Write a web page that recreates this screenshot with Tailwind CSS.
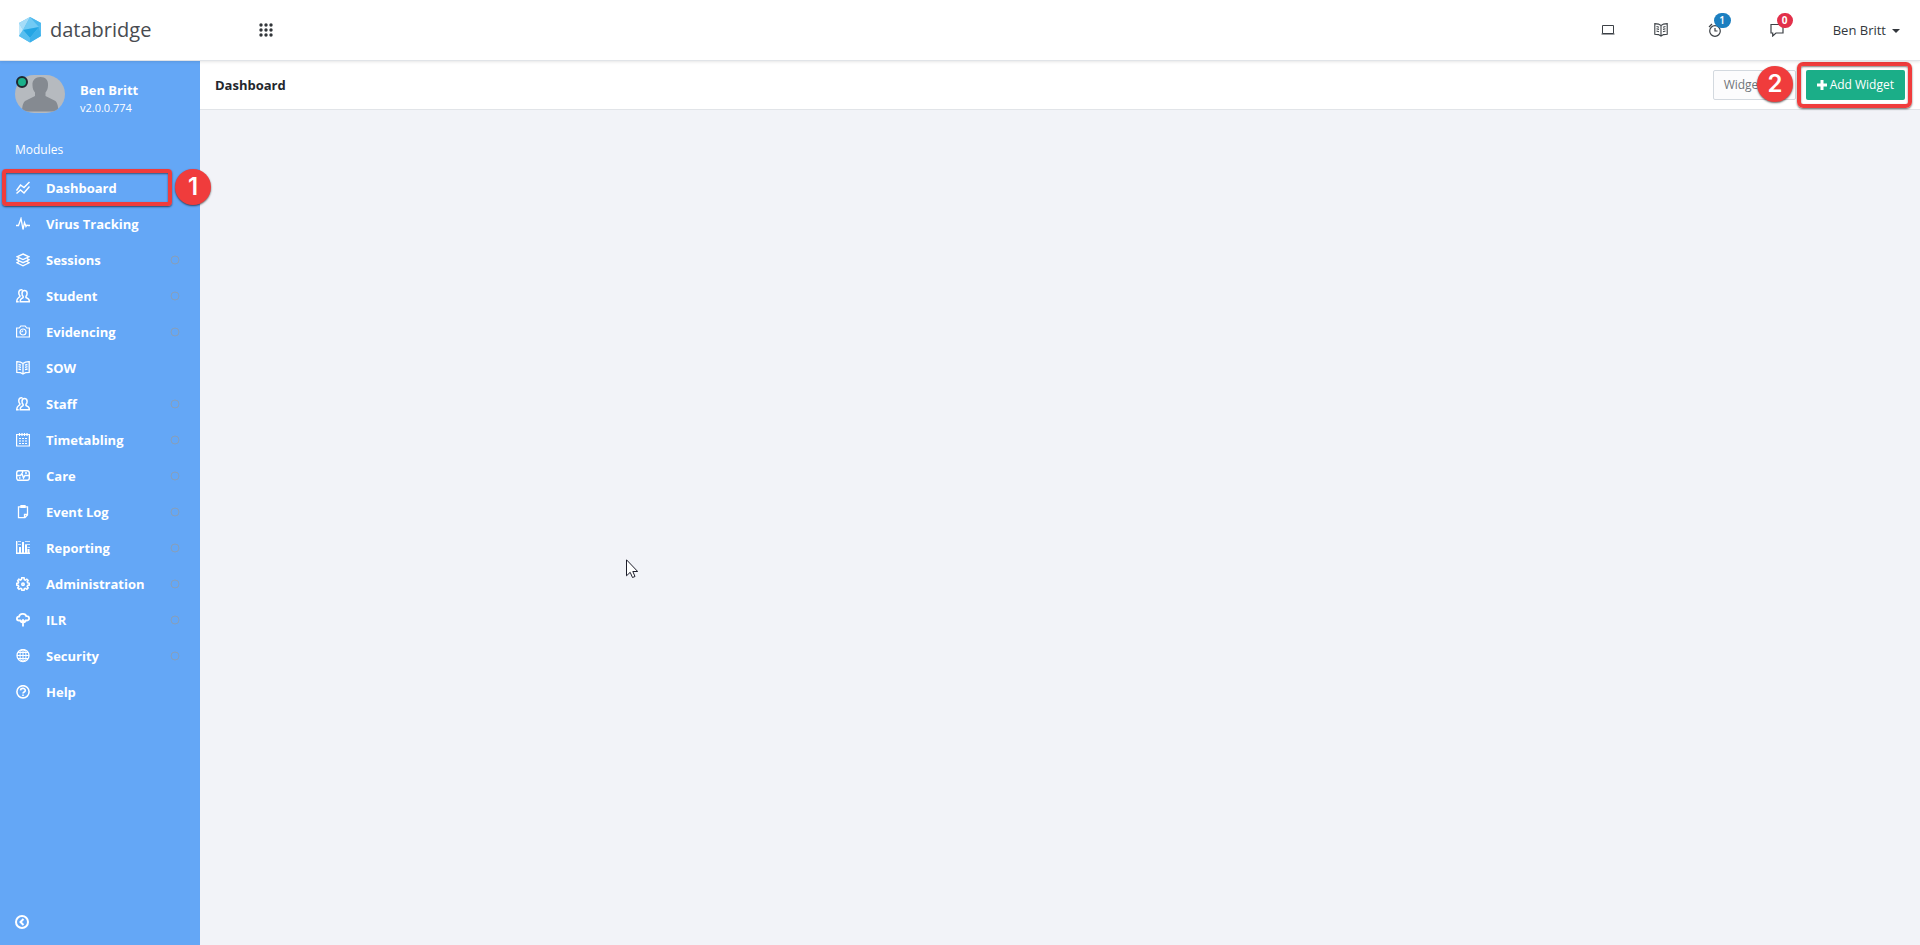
<!DOCTYPE html>
<html lang="en">
<head>
<meta charset="utf-8">
<title>databridge</title>
<script src="https://cdn.jsdelivr.net/npm/@tailwindcss/browser@4"></script>
</head>
<body class="relative flex min-h-screen flex-col overflow-x-hidden bg-[#f2f3f8] font-['Open_Sans',sans-serif] text-[13px] text-[#32373c]">

<svg class="hidden" aria-hidden="true">
  <defs>
    <symbol id="book" viewBox="0 0 14 14"><path d="M7 2.500 4.500 1.100.8.600v10.700l3.700.3L7 13l2.500-1.400 3.700-.3V.6l-3.700.5L7 2.500v10M2.500 3.500l2.500.7M2.500 5.700l2.500.7M2.500 8l2.500.7M11.500 3.500 9 4.200M11.500 5.700 9 6.400M11.500 8 9 8.700"/></symbol>
    <symbol id="people" viewBox="0 0 14 14"><path d="M8.500 1.500c1.700 0 2.600 1.100 2.600 2.900 0 1.300-.4 2.200-1.100 2.900v1.200l2.300 1.300c.7.500 1 1.500 1 3H4.200c0-1.500.3-2.500 1-3l1.900-1.300V7.300C6.300 6.600 6 5.700 6 4.400c0-1.800.9-2.900 2.500-2.900ZM6.500.9C3.900.300 2.700 1.700 2.800 3.900c0 1.300.4 2.100 1.100 2.800v1L2.200 9C1.200 9.700.8 11 .7 12.800h2"/></symbol>
    <symbol id="ring" viewBox="0 0 10 10"><circle cx="5" cy="5" r="4"/></symbol>
  </defs>
</svg>

<header class="relative z-10 flex h-[61px] items-center border-b border-[#e1e4e8] bg-white pr-5 pl-[18px] shadow-[0_1px_3px_rgba(0,0,0,0.1)]">
  <a href="#" class="flex w-[236px] items-center gap-2 text-xl text-[#484b50]">
    <svg class="h-[26px] w-6" viewBox="0 0 24 26">
      <path fill="#5cc0f0" d="M12 0 23 6v13l-11 6.500L1 19V6z"/>
      <path fill="#a5dcf8" d="M12 0 1 6l4 7z"/>
      <path fill="#c2e8fb" d="M1 6v13l4-6z"/>
      <path fill="#72caf4" d="m12 0-7 13 16-3z"/>
      <path fill="#4ab8ee" d="m12 0 11 6-2 4z"/>
      <path fill="#23a5e4" d="m5 13 16-3-9 11z"/>
      <path fill="#58bff0" d="m5 13 7 8v4.500L1 19z"/>
      <path fill="#3cb0ea" d="m21 10-9 11v4.500L23 19z"/>
      <path fill="#52bbef" d="m23 6-2 4 2 9z"/>
    </svg>
    <span>databridge</span>
  </a>
  <button aria-label="Apps" class="ml-[5px]">
    <svg class="size-[14px] fill-[#32363a]" viewBox="0 0 14 14"><circle cx="2" cy="2" r="1.700"/><circle cx="7" cy="2" r="1.700"/><circle cx="12" cy="2" r="1.700"/><circle cx="2" cy="7" r="1.700"/><circle cx="7" cy="7" r="1.700"/><circle cx="12" cy="7" r="1.700"/><circle cx="2" cy="12" r="1.700"/><circle cx="7" cy="12" r="1.700"/><circle cx="12" cy="12" r="1.700"/></svg>
  </button>
  <div class="ml-auto flex items-center">
    <button aria-label="Display" class="mr-[39px]"><svg class="size-[14px] fill-none stroke-[#3c4146]" viewBox="0 0 14 14"><path d="M1.500 2.500h11v8h-11zM.500 11h13"/></svg></button>
    <button aria-label="Guide" class="mr-10"><svg class="size-[14px] fill-none stroke-[#3c4146] [stroke-width:1.1]"><use href="#book"/></svg></button>
    <button aria-label="Reminders" class="relative mr-12">
      <svg class="size-[14px] fill-none stroke-[#3c4146] [stroke-width:1.2]" viewBox="0 0 14 14"><circle cx="7" cy="8" r="5.300"/><path d="M7 5v3h2.500M1 4 4 1M13 4l-3-3"/></svg>
      <span class="absolute -top-[10px] left-[6px] flex h-[15px] w-[17px] items-center justify-center rounded-full bg-[#1c7fc0] text-[10px] font-semibold text-white">1</span>
    </button>
    <button aria-label="Messages" class="relative mr-[49px]">
      <svg class="size-[14px] fill-none stroke-[#3c4146] [stroke-width:1.2]" viewBox="0 0 14 14"><path d="M1 1.500h12v8.500H6l-3.300 3v-3H1z"/></svg>
      <span class="absolute -top-[10px] left-[7px] flex h-[15px] w-4 items-center justify-center rounded-full bg-[#e2304a] text-[10px] font-bold text-white">0</span>
    </button>
    <button class="flex items-center gap-1.5 pt-0.5">Ben Britt
      <svg class="h-1 w-2 fill-[#32373c]" viewBox="0 0 8 4"><path d="M0 0h8L4 4z"/></svg>
    </button>
  </div>
</header>

<div class="-mt-px flex flex-1">
  <aside class="flex w-[200px] shrink-0 flex-col bg-[#64a7f6] text-white">
    <div class="flex items-start gap-[15px] pt-[15px] pl-[15px]">
      <div class="relative">
        <svg class="h-[38px] w-[50px] rounded-[19px]" viewBox="0 0 50 38"><path fill="#b6babf" d="M0 0h50v38H0z"/><path fill="#858a91" d="M25.500 2c5 0 8 3 7.500 8.500 0 3-1 5-2.500 7v3.500l9 4.500c2.500 1.500 3.500 4 4 11H7c.3-7 1.500-9.500 4-11l9-4.500v-3.500c-1.500-2-2.500-4-2.500-7C17 5 20.500 2 25.500 2Z"/></svg>
        <span class="absolute top-px left-px size-3 rounded-full border-2 border-[#20272f] bg-[#1bb08a]"></span>
      </div>
      <div class="pt-1.5">
        <p class="leading-[18px] font-bold">Ben Britt</p>
        <p class="text-[11px] leading-[18px]">v2.0.0.774</p>
      </div>
    </div>
    <h2 class="mt-[21px] h-8 pl-[15px] text-xs leading-6">Modules</h2>
    <nav class="font-bold">
      <a href="#" class="flex h-9 items-center gap-4 px-4"><svg class="size-[14px] fill-none stroke-white [stroke-width:1.5]" viewBox="0 0 14 14"><path d="M.500 9.500 4.500 4l3.500 2.500L13.500 1M.500 12.500l4-3.500 3.500 3 5.500-6.500"/></svg><span class="pt-0.5">Dashboard</span></a>
      <a href="#" class="flex h-9 items-center gap-4 px-4"><svg class="size-[14px] fill-none stroke-white [stroke-width:1.3]" viewBox="0 0 14 14"><path d="M0 8.500h2.500L5 1.500l2 11 1.500-7L10 9.500l1-1.500 1 .5h2"/></svg><span class="pt-0.5">Virus Tracking</span></a>
      <a href="#" class="flex h-9 items-center gap-4 pr-5 pl-4"><svg class="size-[14px] fill-none stroke-white [stroke-width:1.4]" viewBox="0 0 14 14"><path d="m7 1 6 2.800-6 2.800-6-2.800zM3 5.500 1 6.800l6 2.900 6-2.900-2-1.300M3 8.500 1 9.800l6 3 6-3-2-1.300"/></svg><span class="flex-1 pt-0.5">Sessions</span><svg class="size-[10px] fill-none stroke-[#879fba]"><use href="#ring"/></svg></a>
      <a href="#" class="flex h-9 items-center gap-4 pr-5 pl-4"><svg class="size-[14px] fill-none stroke-white [stroke-width:1.5]"><use href="#people"/></svg><span class="flex-1 pt-0.5">Student</span><svg class="size-[10px] fill-none stroke-[#879fba]"><use href="#ring"/></svg></a>
      <a href="#" class="flex h-9 items-center gap-4 pr-5 pl-4"><svg class="size-[14px] fill-none stroke-white [stroke-width:1.2]" viewBox="0 0 14 14"><path d="M.600 3h2.700l1.500-2h4.400l1.500 2h2.700v9H.600z"/><circle cx="7" cy="7" r="3"/><path d="M5.800 7.200c0-.9.500-1.300 1.400-1.300"/></svg><span class="flex-1 pt-0.5">Evidencing</span><svg class="size-[10px] fill-none stroke-[#879fba]"><use href="#ring"/></svg></a>
      <a href="#" class="flex h-9 items-center gap-4 px-4"><svg class="size-[14px] fill-none stroke-white [stroke-width:1.3]"><use href="#book"/></svg><span class="pt-0.5">SOW</span></a>
      <a href="#" class="flex h-9 items-center gap-4 pr-5 pl-4"><svg class="size-[14px] fill-none stroke-white [stroke-width:1.5]"><use href="#people"/></svg><span class="flex-1 pt-0.5">Staff</span><svg class="size-[10px] fill-none stroke-[#879fba]"><use href="#ring"/></svg></a>
      <a href="#" class="flex h-9 items-center gap-4 pr-5 pl-4"><svg class="size-[14px] fill-none stroke-white [stroke-width:1.2]" viewBox="0 0 14 14"><path d="M.600 1.500h12.800v11.500H.600zM3.500 0v3M6 0v3M8.500 0v3M11 0v3"/><path stroke-dasharray="2 1" d="M3 5.500h8.500M3 8h8.500M3 10.500h8.500"/></svg><span class="flex-1 pt-0.5">Timetabling</span><svg class="size-[10px] fill-none stroke-[#879fba]"><use href="#ring"/></svg></a>
      <a href="#" class="flex h-9 items-center gap-4 pr-5 pl-4"><svg class="size-[14px] fill-none stroke-white [stroke-width:1.4]" viewBox="0 0 14 14"><rect x=".7" y="1.700" width="12.600" height="9.600" rx="2.200"/><path d="M1 6.500h3.500L6 4.500 7.500 9 9 6.500h4M6.500 2v2M9 4h2M3 9h1.500"/></svg><span class="flex-1 pt-0.5">Care</span><svg class="size-[10px] fill-none stroke-[#879fba]"><use href="#ring"/></svg></a>
      <a href="#" class="flex h-9 items-center gap-4 pr-5 pl-4"><svg class="size-[14px] fill-none stroke-white [stroke-width:1.3]" viewBox="0 0 14 14"><path d="M2.500 1.800h9v8.200L9 12.700H2.500zM8.500 12.700V9.500h3"/><path fill="white" d="M5 .7h4v1.700H5z"/></svg><span class="flex-1 pt-0.5">Event Log</span><svg class="size-[10px] fill-none stroke-[#879fba]"><use href="#ring"/></svg></a>
      <a href="#" class="flex h-9 items-center gap-4 pr-5 pl-4"><svg class="size-[14px] fill-none stroke-white" viewBox="0 0 14 14"><path stroke-width="1.400" d="M.700 0v12.300H14"/><path stroke-width="2" d="M4 12V6M7 12V1M10 12V4M12.500 12V8"/><path stroke-opacity=".7" d="M2 .500H5M9 .500h5M2 3.500h3M9 3.500h5M11.500 6.500H14"/></svg><span class="flex-1 pt-0.5">Reporting</span><svg class="size-[10px] fill-none stroke-[#879fba]"><use href="#ring"/></svg></a>
      <a href="#" class="flex h-9 items-center gap-4 pr-5 pl-4"><svg class="size-[14px] fill-none stroke-white [stroke-width:1.600]" viewBox="0 0 14 14"><path d="m5.800.8-.4 1.700-1 .5-1.600-.8L1.700 3.700l.9 1.400-.4 1L.7 6.500v1.600l1.600.4.4 1-.9 1.500 1.200 1.200 1.500-.9 1 .4.400 1.600h2.100l.4-1.600 1-.4 1.500.9 1.200-1.200-.9-1.500.4-1 1.600-.4V6.300l-1.600-.4-.4-1 .9-1.500-1.300-1.200-1.400.9-1-.4L8 .8z"/><circle cx="7" cy="7.200" r="1.200"/></svg><span class="flex-1 pt-0.5">Administration</span><svg class="size-[10px] fill-none stroke-[#879fba]"><use href="#ring"/></svg></a>
      <a href="#" class="flex h-9 items-center gap-4 pr-5 pl-4"><svg class="size-[14px] fill-none stroke-white [stroke-width:1.8]" viewBox="0 0 14 14"><path d="M5 7.500H3C.2 7.500.2 3.800 3 3.700 3.700.2 9.500 0 10.300 3.200c3.500-.3 3.700 4.300.7 4.300H9M7 13.500V7M4.500 9.500 7 7l2.500 2.500"/></svg><span class="flex-1 pt-0.5">ILR</span><svg class="size-[10px] fill-none stroke-[#879fba]"><use href="#ring"/></svg></a>
      <a href="#" class="flex h-9 items-center gap-4 pr-5 pl-4"><svg class="size-[14px] fill-none stroke-white" viewBox="0 0 14 14"><circle cx="7" cy="6.500" r="6" stroke-width="1.300"/><ellipse cx="7" cy="6.500" rx="3" ry="6"/><path d="M7 .500v12M1 6.500h12M2 3.500h10M2 9.500h10"/></svg><span class="flex-1 pt-0.5">Security</span><svg class="size-[10px] fill-none stroke-[#879fba]"><use href="#ring"/></svg></a>
      <a href="#" class="flex h-9 items-center gap-4 px-4"><svg class="size-[14px] fill-none stroke-white [stroke-width:1.600]" viewBox="0 0 14 14"><circle cx="7" cy="6.800" r="6.100"/><path d="M4.500 5.400c.2-2.800 5-2.600 4.800.2C9.200 7 7 7 7 8.500M7 9.500V11"/></svg><span class="pt-0.5">Help</span></a>
    </nav>
    <button aria-label="Collapse menu" class="mt-auto mb-4 ml-[15px] self-start"><svg class="size-[14px] fill-none stroke-white [stroke-width:2]" viewBox="0 0 14 14"><circle cx="7" cy="7" r="6"/><path d="M8.500 4 5.500 7l3 3"/></svg></button>
  </aside>

  <main class="min-w-0 flex-1">
    <div class="flex h-[50px] items-center border-b border-[#e1e4e8] bg-white px-[15px]">
      <h1 class="pt-0.5 text-[13px] font-bold text-[#23272d]">Dashboard</h1>
      <div class="ml-auto flex gap-2.5 text-xs">
        <button class="h-[30px] w-[83px] rounded-xs border border-[#d3d9df] bg-[#fcfcfd] px-2.5 text-left text-[#70757a]">Widgets</button>
        <div class="relative">
          <button class="flex h-[30px] items-center gap-[3px] rounded-xs bg-[#1bae88] px-[11px] text-white"><svg class="size-[10px] fill-white" viewBox="0 0 10 10"><path d="M3.500 0h3v3.500H10v3H6.500V10h-3V6.500H0v-3h3.500z"/></svg>Add Widget</button>
          <span class="absolute -inset-y-2 -right-[7px] -left-[9px] rounded-md border-4 border-[#f03c3c] shadow-[0_1px_2px_rgba(0,0,0,0.6),inset_0_1px_2px_rgba(0,0,0,0.5)]"></span>
          <span class="absolute top-[-4px] right-[112px] flex size-9 items-center justify-center rounded-full bg-[#f03c3c] font-['Inter',sans-serif] text-2xl font-semibold text-white shadow-[0_1px_2px_rgba(0,0,0,0.6)]">2</span>
        </div>
      </div>
    </div>
  </main>
</div>

<!-- Walkthrough markers -->
<span class="absolute top-[169px] left-[2px] z-20 h-[37px] w-[170px] rounded-sm border-4 border-[#f03c3c] shadow-[0_1px_2px_rgba(0,0,0,0.6),inset_0_1px_2px_rgba(0,0,0,0.5)]"></span>
<span class="absolute top-[169px] left-[175px] z-20 flex size-9 items-center justify-center rounded-full bg-[#f03c3c] font-['Inter',sans-serif] text-2xl font-semibold text-white shadow-[0_1px_2px_rgba(0,0,0,0.6)]">1</span>
<svg class="absolute top-[559px] left-[626px] z-20 h-5 w-3" viewBox="0 0 12 20"><path fill="white" stroke="#1d1d2b" d="M.500.800v16l3.700-3.500 2.300 5.200 2.500-1-2.200-5h4.900z"/></svg>
</body>
</html>
